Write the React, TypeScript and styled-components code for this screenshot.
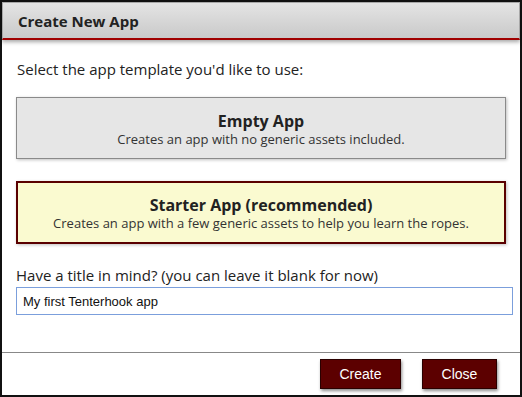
import React from "react";
import styled, { createGlobalStyle } from "styled-components";

const Global = createGlobalStyle`
  html, body { margin: 0; padding: 0; background: #fff; }
  * { box-sizing: border-box; }
`;

const Dialog = styled.div`
  width: 522px;
  height: 397px;
  border: 2px solid #111;
  background: #fff;
  display: flex;
  flex-direction: column;
  font-family: "Open Sans", "Noto Sans", sans-serif;
  color: #222;
`;

const Header = styled.div`
  height: 38px;
  flex: none;
  display: flex;
  align-items: center;
  padding-left: 15px;
  background: linear-gradient(#e4e4e4, #c9c9c9);
  border: 1px solid #a8a8a8;
  border-bottom: 2px solid #a00000;
  box-shadow: 0 2px 4px rgba(0, 0, 0, 0.35);
  font-size: 15px;
  font-weight: 700;
  color: #222;
  position: relative;
  z-index: 1;
`;

const Body = styled.div`
  flex: 1;
  display: flex;
  flex-direction: column;
  padding: 19px 14px 0 14px;
`;

const Prompt = styled.div`
  font-size: 15px;
  line-height: 20px;
  margin: 0 0 0 1px;
`;

const Option = styled.div<{ $selected?: boolean }>`
  height: ${(p) => (p.$selected ? 63 : 62)}px;
  display: flex;
  flex-direction: column;
  align-items: center;
  justify-content: center;
  border: ${(p) => (p.$selected ? "2px solid #5a0000" : "1px solid #8a8a8a")};
  background: ${(p) => (p.$selected ? "#fafad0" : "#e6e6e6")};
  box-shadow: 1px 1px 3px rgba(0, 0, 0, 0.25);
  margin-top: ${(p) => (p.$selected ? 22 : 18)}px;
  padding-top: 2px;
`;

const OptionTitle = styled.div`
  font-size: 16px;
  font-weight: 700;
  line-height: 20px;
`;

const OptionDesc = styled.div`
  font-size: 13px;
  line-height: 17px;
  color: #333;
`;

const Label = styled.div`
  font-size: 15px;
  line-height: 20px;
  margin-top: 21px;
`;

const Input = styled.input`
  margin-top: 2px;
  width: 497px;
  height: 28px;
  border: 1px solid #7b9fdc;
  padding: 0 6px;
  font-family: "Liberation Sans", Arial, sans-serif;
  font-size: 13px;
  color: #111;
  outline: none;
  background: #fff;
`;

const Footer = styled.div`
  flex: none;
  height: 43px;
  border-top: 1px solid #888;
  display: flex;
  justify-content: flex-end;
  align-items: flex-start;
  gap: 21px;
  padding: 6px 23px 0 0;
`;

const Button = styled.button<{ $w: number }>`
  width: ${(p) => p.$w}px;
  height: 30px;
  background: #5c0000;
  border: 1px solid #2a0000;
  box-shadow: 1px 2px 3px rgba(0, 0, 0, 0.45);
  color: #fff;
  font-family: "Liberation Sans", Arial, sans-serif;
  font-size: 14px;
  padding: 0;
  cursor: pointer;
`;

export default function App() {
  return (
    <>
      <Global />
      <Dialog>
        <Header>Create New App</Header>
        <Body>
          <Prompt>Select the app template you'd like to use:</Prompt>
          <Option>
            <OptionTitle>Empty App</OptionTitle>
            <OptionDesc>Creates an app with no generic assets included.</OptionDesc>
          </Option>
          <Option $selected>
            <OptionTitle>Starter App (recommended)</OptionTitle>
            <OptionDesc>
              Creates an app with a few generic assets to help you learn the ropes.
            </OptionDesc>
          </Option>
          <Label>Have a title in mind? (you can leave it blank for now)</Label>
          <Input defaultValue="My first Tenterhook app" />
        </Body>
        <Footer>
          <Button $w={81}>Create</Button>
          <Button $w={75}>Close</Button>
        </Footer>
      </Dialog>
    </>
  );
}
